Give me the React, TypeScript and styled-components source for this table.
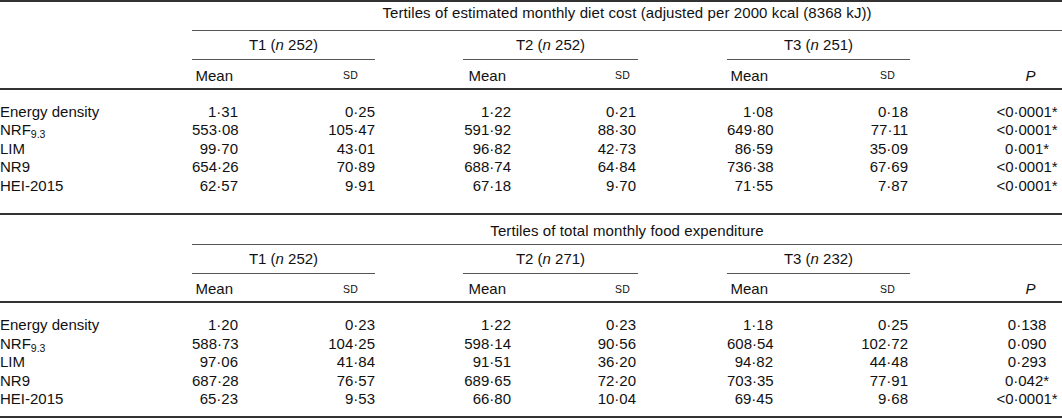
import React from "react";
import styled, { createGlobalStyle } from "styled-components";

type Group = { label: string; n: number; sdPad: number };
type Row = { name: string; values: string[]; p: string };
type Section = { title: string; groups: Group[]; rows: Row[]; last?: boolean };

const sections: Section[] = [
  {
    title: "Tertiles of estimated monthly diet cost (adjusted per 2000 kcal (8368 kJ))",
    groups: [
      { label: "T1", n: 252, sdPad: 17 },
      { label: "T2", n: 252, sdPad: 8 },
      { label: "T3", n: 251, sdPad: 15 },
    ],
    rows: [
      { name: "Energy density", values: ["1·31", "0·25", "1·22", "0·21", "1·08", "0·18"], p: "<0·0001*" },
      { name: "NRF", values: ["553·08", "105·47", "591·92", "88·30", "649·80", "77·11"], p: "<0·0001*" },
      { name: "LIM", values: ["99·70", "43·01", "96·82", "42·73", "86·59", "35·09"], p: "0·001*" },
      { name: "NR9", values: ["654·26", "70·89", "688·74", "64·84", "736·38", "67·69"], p: "<0·0001*" },
      { name: "HEI-2015", values: ["62·57", "9·91", "67·18", "9·70", "71·55", "7·87"], p: "<0·0001*" },
    ],
  },
  {
    title: "Tertiles of total monthly food expenditure",
    groups: [
      { label: "T1", n: 252, sdPad: 17 },
      { label: "T2", n: 271, sdPad: 8 },
      { label: "T3", n: 232, sdPad: 15 },
    ],
    rows: [
      { name: "Energy density", values: ["1·20", "0·23", "1·22", "0·23", "1·18", "0·25"], p: "0·138" },
      { name: "NRF", values: ["588·73", "104·25", "598·14", "90·56", "608·54", "102·72"], p: "0·090" },
      { name: "LIM", values: ["97·06", "41·84", "91·51", "36·20", "94·82", "44·48"], p: "0·293" },
      { name: "NR9", values: ["687·28", "76·57", "689·65", "72·20", "703·35", "77·91"], p: "0·042*" },
      { name: "HEI-2015", values: ["65·23", "9·53", "66·80", "10·04", "69·45", "9·68"], p: "<0·0001*" },
    ],
    last: true,
  },
];

// column widths: label, (mean, sd, gap) x3 -> last gap, P
const widths = [192, 50, 133, 88, 52, 123, 89, 50, 133, 82, 70];

const App = () => {
  return (
    <>
      <GlobalStyle />
      <Page>
        {sections.map((s, si) => (
          <Table key={si} $first={si === 0} $last={!!s.last}>
            <colgroup>
              {widths.map((w, i) => (
                <col key={i} style={{ width: w }} />
              ))}
            </colgroup>
            <thead>
              <tr>
                <th />
                <TitleCell colSpan={10} $first={si === 0}>
                  {s.title}
                </TitleCell>
              </tr>
              <tr>
                <th />
                {s.groups.map((g, gi) => (
                  <React.Fragment key={gi}>
                    <GroupCell colSpan={2}>
                      {g.label} (<i>n</i> {g.n})
                    </GroupCell>
                    <th colSpan={gi === 2 ? 2 : 1} />
                  </React.Fragment>
                ))}
              </tr>
              <SubHeadRow>
                <th />
                {s.groups.map((g, gi) => (
                  <React.Fragment key={gi}>
                    <MeanHead>Mean</MeanHead>
                    <SdHead $pad={g.sdPad}>sd</SdHead>
                    <th />
                  </React.Fragment>
                ))}
                <PHead>P</PHead>
              </SubHeadRow>
            </thead>
            <tbody>
              {s.rows.map((r, ri) => (
                <tr key={ri}>
                  <Label>
                    {r.name}
                    {r.name === "NRF" && <Sub>9.3</Sub>}
                  </Label>
                  {[0, 1, 2].map((gi) => (
                    <React.Fragment key={gi}>
                      <Value $pad={4}>{r.values[gi * 2]}</Value>
                      <Value $pad={gi === 0 ? 0 : 2}>{r.values[gi * 2 + 1]}</Value>
                      <td />
                    </React.Fragment>
                  ))}
                  <PValue>{r.p}</PValue>
                </tr>
              ))}
            </tbody>
          </Table>
        ))}
      </Page>
    </>
  );
};

export default App;

const GlobalStyle = createGlobalStyle`
  body {
    margin: 0;
    background: #ffffff;
    font-family: "Liberation Sans", Arial, sans-serif;
    color: #111111;
  }
`;

const Page = styled.div`
  width: 1062px;
  display: flex;
  flex-direction: column;
`;

const Table = styled.table<{ $first: boolean; $last: boolean }>`
  width: 1062px;
  table-layout: fixed;
  border-collapse: collapse;
  font-size: 15px;
  border-top: ${({ $first }) => ($first ? "2px solid #333" : "none")};
  border-bottom: 2px solid #333;

  th,
  td {
    padding: 0;
    font-weight: normal;
    white-space: nowrap;
  }

  thead tr {
    height: 29px;
  }

  tbody tr:first-child td {
    padding-top: 13px;
  }
  tbody tr:last-child td {
    padding-bottom: ${({ $last }) => ($last ? "7px" : "18px")};
  }
`;

const TitleCell = styled.th<{ $first: boolean }>`
  text-align: center;
  border-bottom: 1px solid #555;
  line-height: 22px;
  padding-top: ${({ $first }) => ($first ? "0" : "5px")} !important;
  padding-bottom: ${({ $first }) => ($first ? "6px" : "1px")} !important;
  letter-spacing: 0.1px;
`;

const GroupCell = styled.th`
  text-align: center;
  border-bottom: 1px solid #555;
  line-height: 28px;
`;

const SubHeadRow = styled.tr`
  th {
    border-bottom: 2px solid #333;
    vertical-align: middle;
    padding-top: 3px;
  }
`;

const MeanHead = styled.th`
  text-align: right;
  padding-right: 9px !important;
`;

const SdHead = styled.th<{ $pad: number }>`
  text-align: right;
  padding-right: ${({ $pad }) => $pad}px !important;
  font-size: 10.5px;
  text-transform: uppercase;
  letter-spacing: 0.2px;
`;

const PHead = styled.th`
  text-align: center;
  font-style: italic;
  padding-left: 7px !important;
`;

const Label = styled.td`
  text-align: left;
  line-height: 18.5px;
`;

const Value = styled.td<{ $pad: number }>`
  text-align: right;
  line-height: 18.5px;
  padding-right: ${({ $pad }) => $pad}px !important;
`;

const PValue = styled.td`
  text-align: center;
  line-height: 18.5px;
`;

const Sub = styled.sub`
  font-size: 10.5px;
  vertical-align: -3px;
  line-height: 0;
`;
